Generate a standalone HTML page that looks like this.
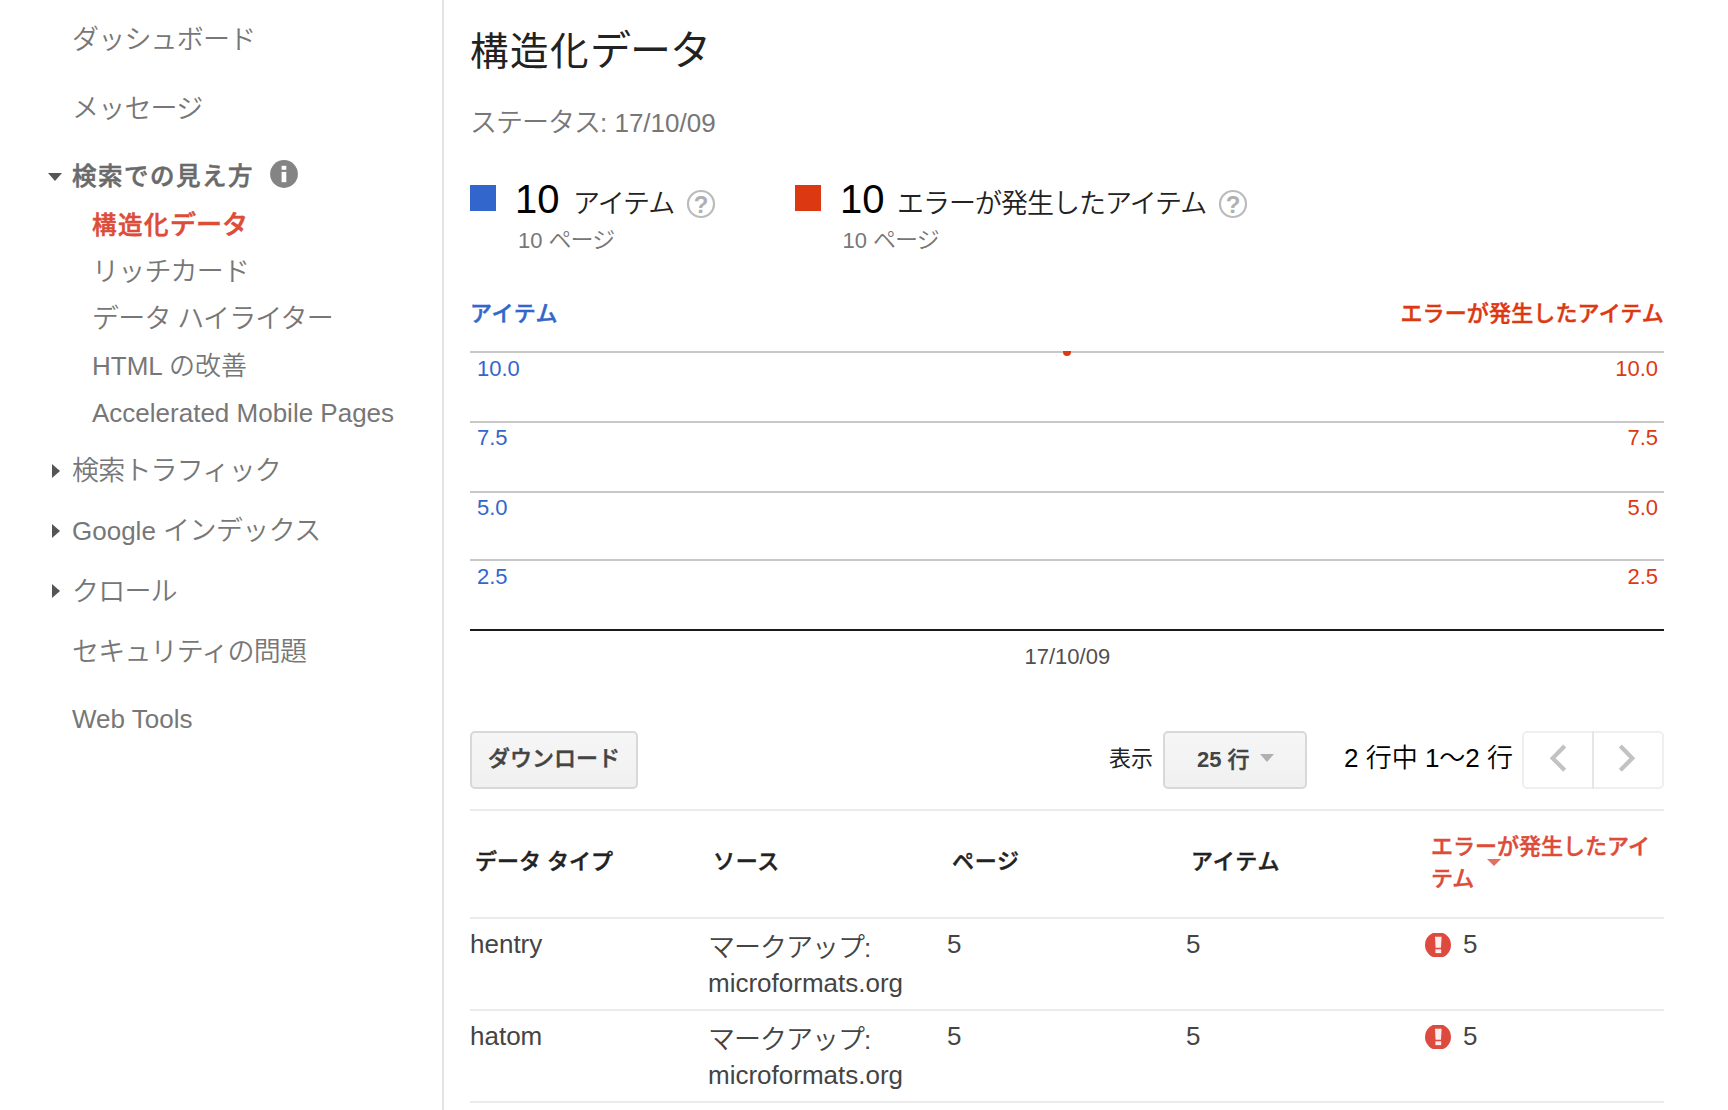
<!DOCTYPE html>
<html lang="ja">
<head>
<meta charset="utf-8">
<title>構造化データ</title>
<style>
html,body{margin:0;padding:0;}
body{width:1728px;height:1110px;overflow:hidden;background:#fff;position:relative;
  font-family:"Liberation Sans","Noto Sans CJK JP",sans-serif;color:#222;font-weight:300;}
.a{position:absolute;white-space:nowrap;line-height:1;}
/* sidebar */
.nav{color:#777;font-size:26px;font-weight:350;}
.j{font-size:27px !important;letter-spacing:-0.8px;}
.nav.b{font-weight:500;color:#6a6a6a;-webkit-text-stroke:0.55px #6a6a6a;}
.nav.sel{font-weight:500;color:#dd4b39;-webkit-text-stroke:0.55px #dd4b39;}
#vline{left:442px;top:0;width:2px;height:1110px;background:#e3e3e3;}
.tri-r{width:0;height:0;border-left:8px solid #555;border-top:7px solid transparent;border-bottom:7px solid transparent;}
.tri-d{width:0;height:0;border-top:8px solid #555;border-left:7px solid transparent;border-right:7px solid transparent;}
/* main */
.hl{height:2px;background:#c8c8c8;left:470px;width:1194px;}
.ll{height:2px;background:#ebebeb;left:470px;width:1194px;}
.axl{color:#3366cc;font-size:22px;}
.axr{color:#dc3912;font-size:22px;text-align:right;}
.btn{background:linear-gradient(#f6f6f6,#f0f0f0);border:2px solid #d8d8d8;border-radius:5px;box-sizing:border-box;}
.th{font-weight:500;font-size:22px;color:#222;-webkit-text-stroke:0.45px currentColor;}
.td{font-size:26px;color:#444;}
</style>
</head>
<body>
<!-- sidebar -->
<div class="a nav j" id="n1" style="left:72px;top:27px;">ダッシュボード</div>
<div class="a nav j" id="n2" style="left:72px;top:96px;">メッセージ</div>
<div class="a tri-d" style="left:48px;top:173px;"></div>
<div class="a nav b" id="n3" style="left:72px;top:163px;"><span style="font-size:24.5px;letter-spacing:1.5px">検索での見え方</span></div>
<svg class="a" id="info" style="left:270px;top:160px;" width="28" height="28" viewBox="0 0 28 28"><circle cx="14" cy="14" r="13.9" fill="#848484"/><rect x="11.6" y="5.8" width="4.7" height="4" fill="#fff"/><rect x="11.6" y="11.9" width="4.7" height="10.3" fill="#fff"/></svg>
<div class="a nav sel" id="n4" style="left:92px;top:212px;"><span style="font-size:24.5px;letter-spacing:1.5px">構造化</span>データ</div>
<div class="a nav j" id="n5" style="left:92px;top:259px;">リッチカード</div>
<div class="a nav j" id="n6" style="left:92px;top:306px;">データ ハイライター</div>
<div class="a nav" id="n7" style="left:92px;top:353px;">HTML の改善</div>
<div class="a nav" id="n8" style="left:92px;top:400px;">Accelerated Mobile Pages</div>
<div class="a tri-r" style="left:52px;top:464px;"></div>
<div class="a nav j" id="n9" style="left:72px;top:458px;">検索トラフィック</div>
<div class="a tri-r" style="left:52px;top:524px;"></div>
<div class="a nav" id="n10" style="left:72px;top:518px;">Google <span style="font-size:27px;letter-spacing:-0.6px">インデックス</span></div>
<div class="a tri-r" style="left:52px;top:584px;"></div>
<div class="a nav j" id="n11" style="left:72px;top:579px;">クロール</div>
<div class="a nav j" id="n12" style="left:72px;top:639px;">セキュリティの問題</div>
<div class="a nav" id="n13" style="left:72px;top:706px;">Web Tools</div>
<div class="a" id="vline"></div>

<!-- main header -->
<div class="a" id="title" style="left:470px;top:31px;font-size:41px;letter-spacing:-1px;color:#222;font-weight:400;"><span style="font-size:38.5px;letter-spacing:1.5px">構造化</span>データ</div>
<div class="a" id="status" style="left:470px;top:110px;font-size:26px;color:#777;font-weight:350;"><span style="font-size:27px;letter-spacing:-1px">ステータス</span>: 17/10/09</div>

<!-- legend -->
<div class="a" id="sqb" style="left:470px;top:185px;width:26px;height:26px;background:#3366cc;"></div>
<div class="a" id="num1" style="left:515px;top:179px;font-size:40px;color:#000;">10</div>
<div class="a" id="lg1" style="left:573px;top:191px;font-size:27px;letter-spacing:-1px;font-weight:350;color:#222;">アイテム</div>
<div class="a" id="pg1" style="left:518px;top:229px;font-size:22px;color:#777;font-weight:350;">10 <span style="font-size:23px;letter-spacing:-1px">ページ</span></div>
<div class="a" id="sqr" style="left:795px;top:185px;width:26px;height:26px;background:#dc3912;"></div>
<div class="a" id="num2" style="left:840px;top:179px;font-size:40px;color:#000;">10</div>
<div class="a" id="lg2" style="left:897px;top:191px;font-size:27px;letter-spacing:-1px;font-weight:350;color:#222;">エラーが発生したアイテム</div>
<div class="a" id="pg2" style="left:842.5px;top:229px;font-size:22px;color:#777;font-weight:350;">10 <span style="font-size:23px;letter-spacing:-1px">ページ</span></div>

<svg class="a" id="h1" style="left:686px;top:189px;" width="30" height="30" viewBox="0 0 30 30"><circle cx="15" cy="15" r="13" fill="#fff" stroke="#bbb" stroke-width="2.2"/><text x="15" y="23.5" text-anchor="middle" font-family="Liberation Sans, sans-serif" font-weight="bold" font-size="24" fill="#b0b0b0">?</text></svg>
<svg class="a" id="h2" style="left:1218px;top:189px;" width="30" height="30" viewBox="0 0 30 30"><circle cx="15" cy="15" r="13" fill="#fff" stroke="#bbb" stroke-width="2.2"/><text x="15" y="23.5" text-anchor="middle" font-family="Liberation Sans, sans-serif" font-weight="bold" font-size="24" fill="#b0b0b0">?</text></svg>
<!-- chart -->
<div class="a" id="cl" style="left:470px;top:303px;letter-spacing:0.6px;font-size:22px;font-weight:500;-webkit-text-stroke:0.45px #3366cc;color:#3366cc;">アイテム</div>
<div class="a" id="cr" style="right:64px;top:303px;letter-spacing:0.15px;font-size:22px;font-weight:500;-webkit-text-stroke:0.45px #dc3912;color:#dc3912;">エラーが発生したアイテム</div>
<div class="a hl" style="top:351px;"></div>
<div class="a hl" style="top:421px;"></div>
<div class="a hl" style="top:491px;"></div>
<div class="a hl" style="top:559px;"></div>
<div class="a hl" style="top:629px;background:#1a1a1a;"></div>
<div class="a" id="dot" style="left:1062.6px;top:351px;width:8.8px;height:4.8px;border-radius:0 0 4.4px 4.4px;background:#dc3912;"></div>
<div class="a axl" id="al1" style="left:477px;top:358px;">10.0</div>
<div class="a axl" id="al2" style="left:477px;top:427px;">7.5</div>
<div class="a axl" id="al3" style="left:477px;top:497px;">5.0</div>
<div class="a axl" id="al4" style="left:477px;top:566px;">2.5</div>
<div class="a axr" id="ar1" style="right:70px;top:358px;">10.0</div>
<div class="a axr" id="ar2" style="right:70px;top:427px;">7.5</div>
<div class="a axr" id="ar3" style="right:70px;top:497px;">5.0</div>
<div class="a axr" id="ar4" style="right:70px;top:566px;">2.5</div>
<div class="a" id="xd" style="left:1024.5px;top:646px;font-size:22px;color:#505050;">17/10/09</div>

<!-- toolbar -->
<div class="a btn" id="dl" style="left:470px;top:731px;width:168px;height:58px;"></div>
<div class="a" id="dlt" style="left:488px;top:748px;font-size:22px;font-weight:500;color:#444;-webkit-text-stroke:0.45px #444;">ダウンロード</div>
<div class="a" id="show" style="left:1109px;top:748px;font-size:22px;color:#222;font-weight:400;">表示</div>
<div class="a btn" id="rows" style="left:1163px;top:731px;width:144px;height:58px;"></div>
<div class="a" id="rowst" style="left:1197px;top:749px;font-size:22px;font-weight:bold;color:#444;">25 <span style="font-weight:500;-webkit-text-stroke:0.45px #444">行</span></div>
<div class="a" id="rowsa" style="left:1260px;top:754px;width:0;height:0;border-top:8px solid #b0b0b0;border-left:7px solid transparent;border-right:7px solid transparent;"></div>
<div class="a" id="range" style="left:1344px;top:745px;font-size:26px;color:#000;font-weight:350;">2 行中 1～2 行</div>
<div class="a" id="pbtn" style="left:1521.5px;top:731px;width:142.5px;height:58px;border:2px solid #efefef;border-radius:5px;box-sizing:border-box;"></div>
<div class="a" style="left:1591.7px;top:731px;width:2px;height:58px;background:#e6e6e6;"></div>
<svg class="a" style="left:1540px;top:740px;" width="110" height="40" viewBox="1540 740 110 40"><path d="M1564.7 746.1 L1552.7 758.2 L1564.7 770.3" fill="none" stroke="#c2c2c2" stroke-width="4.2"/><path d="M1620.3 746.1 L1632.3 758.2 L1620.3 770.3" fill="none" stroke="#c2c2c2" stroke-width="4.2"/></svg>

<!-- table -->
<div class="a ll" style="top:809px;"></div>
<div class="a th" id="th1" style="left:475px;top:851px;letter-spacing:0px;">データ タイプ</div>
<div class="a th" id="th2" style="left:713px;top:851px;letter-spacing:0.7px;">ソース</div>
<div class="a th" id="th3" style="left:952px;top:851px;letter-spacing:0.7px;">ページ</div>
<div class="a th" id="th4" style="left:1191px;top:851px;letter-spacing:0.9px;">アイテム</div>
<div class="a th" id="th5" style="left:1431px;top:836px;letter-spacing:0px;color:#dd4b39;">エラーが発生したアイ</div>
<div class="a th" id="th6" style="left:1431px;top:868px;letter-spacing:0px;color:#dd4b39;">テム</div>
<div class="a" id="sorta" style="left:1487px;top:859px;width:0;height:0;border-top:7px solid #e46f61;border-left:7px solid transparent;border-right:7px solid transparent;"></div>
<div class="a ll" style="top:917px;"></div>
<div class="a td" id="r1a" style="left:470px;top:931px;">hentry</div>
<div class="a td" id="r1b" style="left:708px;top:935px;"><span style="font-size:27px;letter-spacing:-1px;font-weight:350">マークアップ</span>:</div>
<div class="a td" id="r1c" style="left:708px;top:969.5px;">microformats.org</div>
<div class="a td" id="r1d" style="left:947px;top:931px;">5</div>
<div class="a td" id="r1e" style="left:1186px;top:931px;">5</div>
<div class="a td" id="r1f" style="left:1463px;top:931px;">5</div>
<svg class="a" id="e1" style="left:1424px;top:933px;" width="28" height="24" viewBox="0 0 28 24"><circle cx="14" cy="12" r="13" fill="#df4a3f"/><path d="M11 3.8 H17.6 L17 14.7 H11.6 Z" fill="#fdeceb"/><rect x="11.4" y="16.3" width="5.8" height="3.8" fill="#fdeceb"/></svg>
<div class="a ll" style="top:1009px;"></div>
<div class="a td" id="r2a" style="left:470px;top:1023px;">hatom</div>
<div class="a td" id="r2b" style="left:708px;top:1027px;"><span style="font-size:27px;letter-spacing:-1px;font-weight:350">マークアップ</span>:</div>
<div class="a td" id="r2c" style="left:708px;top:1061.5px;">microformats.org</div>
<div class="a td" id="r2d" style="left:947px;top:1023px;">5</div>
<div class="a td" id="r2e" style="left:1186px;top:1023px;">5</div>
<div class="a td" id="r2f" style="left:1463px;top:1023px;">5</div>
<svg class="a" id="e2" style="left:1424px;top:1025px;" width="28" height="24" viewBox="0 0 28 24"><circle cx="14" cy="12" r="13" fill="#df4a3f"/><path d="M11 3.8 H17.6 L17 14.7 H11.6 Z" fill="#fdeceb"/><rect x="11.4" y="16.3" width="5.8" height="3.8" fill="#fdeceb"/></svg>
<div class="a ll" style="top:1101px;"></div>
</body>
</html>
